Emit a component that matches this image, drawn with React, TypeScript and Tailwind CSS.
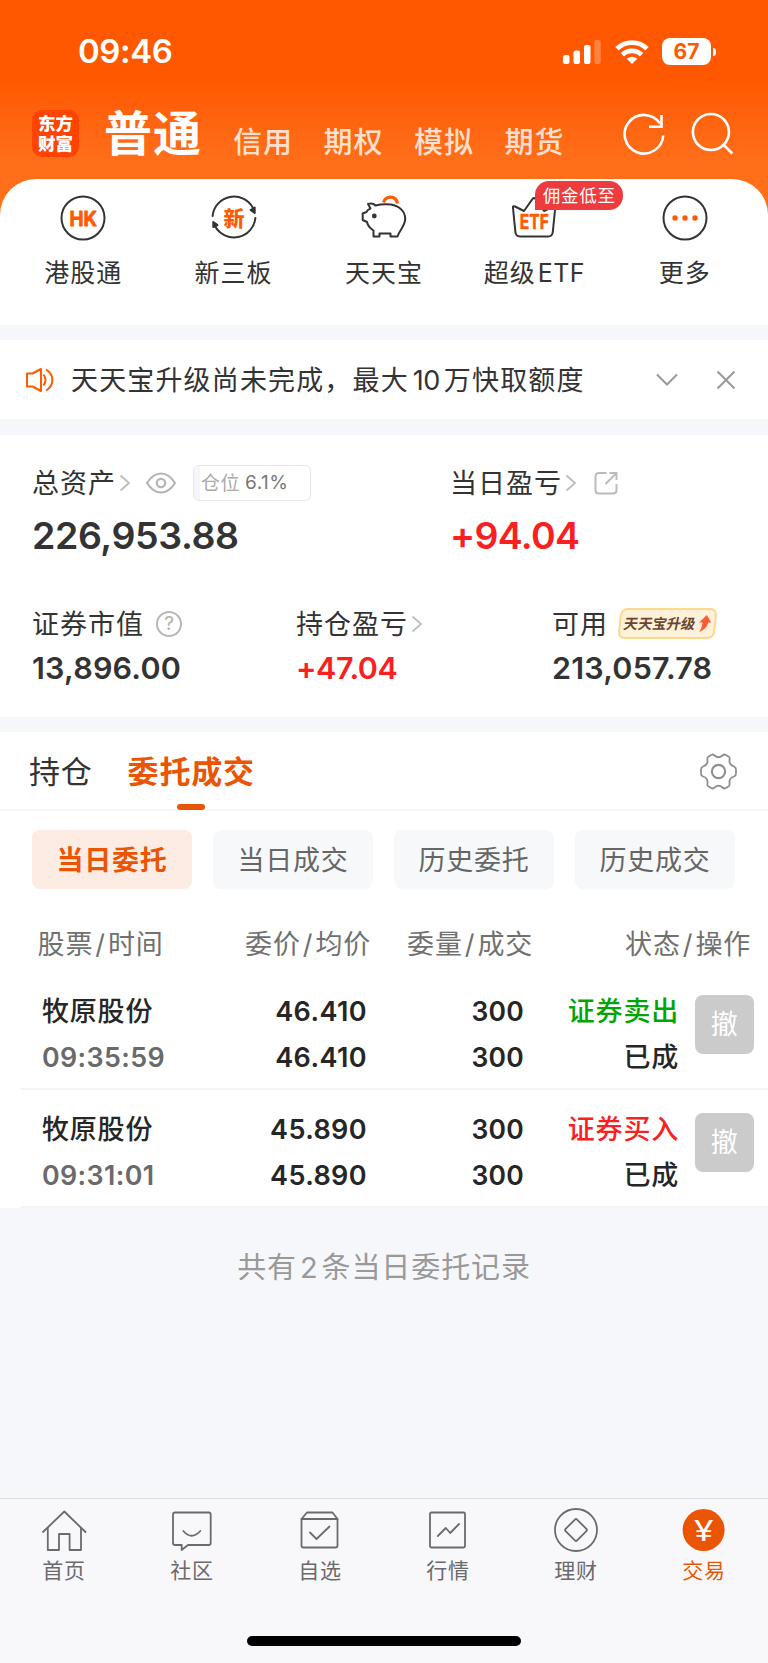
import type { ReactNode } from "react"

const shortcuts = [
  { label: "港股通", icon: <HkIcon /> },
  { label: "新三板", icon: <NewBoardIcon /> },
  { label: "天天宝", icon: <PiggyIcon /> },
  { label: "超级ETF", icon: <EtfIcon />, badge: "佣金低至" },
  { label: "更多", icon: <MoreIcon /> },
]

const filters = ["当日委托", "当日成交", "历史委托", "历史成交"]

const orders = [
  { name: "牧原股份", time: "09:35:59", price: "46.410", avg: "46.410", qty: "300", done: "300", side: "证券卖出", sell: true },
  { name: "牧原股份", time: "09:31:01", price: "45.890", avg: "45.890", qty: "300", done: "300", side: "证券买入", sell: false },
]

const tabs = [
  { label: "首页", icon: <HomeIcon /> },
  { label: "社区", icon: <ChatIcon /> },
  { label: "自选", icon: <BoxIcon /> },
  { label: "行情", icon: <ChartIcon /> },
  { label: "理财", icon: <WealthIcon /> },
  { label: "交易", icon: <TradeIcon />, active: true },
]

function Icon44({ children }: { children: ReactNode }) {
  return (
    <svg width="46" height="46" viewBox="-1 -1 46 46" fill="none" stroke="#333" strokeWidth="2" strokeLinecap="round" strokeLinejoin="round">
      {children}
    </svg>
  )
}

function HkIcon() {
  return (
    <Icon44>
      <circle cx="22" cy="22" r="21.5" />
      <text x="8.500" y="29.500" fontSize="20" fontWeight="700" fill="#ff5a00" stroke="#ff5a00" strokeWidth="0.800" textLength="27.500" lengthAdjust="spacingAndGlyphs">HK</text>
    </Icon44>
  )
}

function NewBoardIcon() {
  return (
    <Icon44>
      <path d="M0.6 20A21.5 21.5 0 0 1 41 12" />
      <path d="M43.4 22A21.5 21.5 0 0 1 3 30" />
      <path d="M42.7 11.5V17L38.5 14Z" fill="#333" />
      <path d="M1.3 31V26L5.5 29Z" fill="#333" />
      <text x="22" y="30" textAnchor="middle" fontSize="21" fontWeight="900" fill="#ff5a00" stroke="none">新</text>
    </Icon44>
  )
}

function PiggyIcon() {
  return (
    <Icon44>
      <path d="M21.500 6.500C23.500 0 33.500 -1.500 35.500 7.500" stroke="#ff5a00" strokeWidth="3.200" strokeLinecap="butt" />
      <path d="M6 8Q11 6.500 13.500 9.500Q21 7.500 29 8.500C38 10 43.200 16 43.200 22.500C43.200 30 38 33 35.500 40.500H28.500V37.500H17.500V40.500H11.500V34.500Q6 31 5 26L0.700 24V17.500L4.500 16Q5 14 8.500 12.500Z" />
      <circle cx="12.300" cy="20" r="2.400" fill="#333" stroke="none" />
    </Icon44>
  )
}

function EtfIcon() {
  return (
    <Icon44>
      <path d="M1 12Q0.500 9.500 3 10.500L12 15L20.500 3Q22 1 23.500 3L32 15L41 10.500Q43.500 9.500 43.200 12L40.800 36Q40.400 40.500 36 40.500H8Q3.800 40.500 3.400 36Z" />
      <text x="7.800" y="33" fontSize="20" fontWeight="700" fill="#ff5a00" stroke="#ff5a00" strokeWidth="0.600" textLength="29" lengthAdjust="spacingAndGlyphs">ETF</text>
    </Icon44>
  )
}

function MoreIcon() {
  return (
    <Icon44>
      <circle cx="22" cy="22" r="21.5" />
      <g fill="#ff5a00" stroke="none">
        <circle cx="12" cy="22" r="2.700" />
        <circle cx="22" cy="22" r="2.700" />
        <circle cx="32" cy="22" r="2.700" />
      </g>
    </Icon44>
  )
}

function TabSvg({ children }: { children: ReactNode }) {
  return (
    <svg width="46" height="46" viewBox="-1 -1 46 46" fill="none" stroke="#6b6b6d" strokeWidth="1.8" strokeLinecap="round" strokeLinejoin="round">
      {children}
    </svg>
  )
}

function HomeIcon() {
  return (
    <TabSvg>
      <path d="M1 24L22.300 3.500L43.500 24" />
      <path d="M5.800 20V42H17V26H27.600V42H39V20" />
    </TabSvg>
  )
}

function ChatIcon() {
  return (
    <TabSvg>
      <path d="M5 4.500H38.700Q40.700 4.500 40.700 6.500V35Q40.700 37 38.700 37H18L11.700 42V37H5Q3 37 3 35V6.500Q3 4.500 5 4.500Z" />
      <path d="M13.300 23Q21.500 32.500 30.300 23" />
    </TabSvg>
  )
}

function BoxIcon() {
  return (
    <TabSvg>
      <path d="M3.500 11L9 4.500H34.500L39.500 11V37.500Q39.500 39.500 37.500 39.500H5.500Q3.500 39.500 3.500 37.500Z" />
      <path d="M3.500 11H39.500M12 24.500L18.500 31L31.500 18.500" />
    </TabSvg>
  )
}

function ChartIcon() {
  return (
    <TabSvg>
      <rect x="4" y="4.500" width="35" height="35" rx="1.500" />
      <path d="M11.800 28L19.800 20L24.200 25L33 16" />
    </TabSvg>
  )
}

function WealthIcon() {
  return (
    <TabSvg>
      <circle cx="22" cy="22" r="21" />
      <path d="M20.900 11.600Q22 10.500 23.100 11.600L32.400 20.900Q33.500 22 32.400 23.100L23.100 32.400Q22 33.500 20.900 32.400L11.600 23.100Q10.500 22 11.600 20.900Z" />
    </TabSvg>
  )
}

function TradeIcon() {
  return (
    <TabSvg>
      <circle cx="21.600" cy="22" r="21" fill="#ea5504" stroke="none" />
      <text x="12" y="32.500" fontSize="28" fill="#fff" stroke="none" textLength="19.500" lengthAdjust="spacingAndGlyphs">¥</text>
    </TabSvg>
  )
}

function Chevron({ className = "" }: { className?: string }) {
  return (
    <svg className={className} width="12" height="18" viewBox="0 0 12 18" fill="none" stroke="#bdbdbd" strokeWidth="1.800">
      <path d="M1.500 1.500L10 9L1.500 16.500" />
    </svg>
  )
}

function StatusBar() {
  return (
    <div className="flex h-[103px] items-center pl-[78px] pr-[52px] text-white">
      <div className="text-[33px] font-semibold leading-none tracking-[-0.400px]">09:46</div>
      <svg className="ml-auto" width="40" height="26" viewBox="0 0 40 26" fill="#fff">
        <rect x="1" y="16" width="6.500" height="9" rx="2" />
        <rect x="11.500" y="11.500" width="6.500" height="13.500" rx="2" />
        <rect x="22" y="6" width="6.500" height="19" rx="2" />
        <rect x="32.300" y="1" width="6.500" height="24" rx="2" opacity="0.250" />
      </svg>
      <svg className="ml-[13px]" width="34" height="26" viewBox="0 0 34 26" fill="none" stroke="#fff" strokeWidth="4.800">
        <path d="M2 9.700A21.500 21.500 0 0 1 32 9.700" />
        <path d="M7.400 15.700A13.800 13.800 0 0 1 26.600 15.700" />
        <path d="M17 25L11.700 19.800A7.600 7.600 0 0 1 22.300 19.800Z" fill="#fff" stroke="none" />
      </svg>
      <div className="ml-[13px] flex h-[27px] w-[49px] items-center justify-center rounded-[8px] bg-white text-[21px] font-bold leading-none text-[#ff5a00]">67</div>
      <div className="ml-0.5 h-2 w-[3px] rounded-r-full bg-white" />
    </div>
  )
}

function Header() {
  return (
    <header className="h-[223px] bg-linear-to-b from-[#ff5800] from-[80px] to-[#ff6e19] to-[160px]">
      <StatusBar />
      <div className="flex h-[76px] items-start pl-8">
        <div className="mt-[7px] flex h-[47px] w-[47px] flex-col items-center justify-center rounded-[10px] bg-[#ff4300] text-[17.500px] font-black leading-[20px] text-white">
          <span>东方</span>
          <span>财富</span>
        </div>
        <div className="ml-[25px] mt-[6px] text-[48px] font-bold leading-[50px] tracking-[1px] text-white">普通</div>
        <div className="ml-[31px] mt-[21.500px] flex gap-[30.500px] text-[29px] font-medium leading-[36px] tracking-[1px] text-[#ffe0cf]">
          <span>信用</span>
          <span>期权</span>
          <span>模拟</span>
          <span>期货</span>
        </div>
        <svg className="ml-[57.500px] mt-[9px]" width="44" height="44" viewBox="0 0 44 44" fill="none" stroke="#fff" strokeWidth="2.600">
          <path d="M41.200 23.500A19.300 19.300 0 1 1 38 11.500" />
          <path d="M39.500 3V14.800H27" />
        </svg>
        <svg className="ml-6 mt-[8px]" width="44" height="44" viewBox="0 0 44 44" fill="none" stroke="#fff" strokeWidth="2.600">
          <circle cx="20.900" cy="21" r="18" />
          <path d="M33.300 33.500L42.300 42.500" />
        </svg>
      </div>
    </header>
  )
}

function Shortcuts() {
  return (
    <section className="-mt-11 h-[146px] rounded-t-[36px] bg-white px-2 pt-4">
      <div className="grid grid-cols-5">
        {shortcuts.map((s) => (
          <div key={s.label} className="relative flex flex-col items-center">
            {s.icon}
            <div className="mt-[15px] text-[25px] leading-[34px] tracking-[1px] text-[#333]">
              {s.label === "超级ETF" ? <>超级<span className="ml-[2px] tracking-[0.500px]">ETF</span></> : s.label}
            </div>
            {s.badge && (
              <div className="absolute left-[76px] -top-[14px] flex h-[29px] w-[88px] items-center justify-center rounded-[14px] rounded-bl-none bg-[#ed3b3e] text-[17.500px] leading-none tracking-[0.700px] text-white">
                {s.badge}
              </div>
            )}
          </div>
        ))}
      </div>
    </section>
  )
}

function Notice() {
  return (
    <section className="mt-[15px] flex h-[79px] items-center bg-white pl-[25px] pr-8">
      <svg width="30" height="26" viewBox="0 0 30 26" fill="none" stroke="#ff5a00" strokeWidth="2" strokeLinejoin="round">
        <path d="M2 6.500H7.500L16 2V24L7.500 19.500H2Z" />
        <path d="M18.500 7.500Q22.500 13 18.500 18.500" />
        <path d="M21 2.500C29.500 7.500 29.500 18.500 21 23.500" />
      </svg>
      <div className="ml-[16px] whitespace-nowrap pt-px text-[27px] leading-none tracking-[1.150px] text-[#333]">
        天天宝升级尚未完成，最大<span className="mx-1 tracking-[-0.500px]">10</span>万快取额度
      </div>
      <svg className="ml-auto" width="22" height="14" viewBox="0 0 22 14" fill="none" stroke="#999" strokeWidth="2">
        <path d="M1 1.500L11 11.500L21 1.500" />
      </svg>
      <svg className="ml-[38px]" width="20" height="20" viewBox="0 0 20 20" fill="none" stroke="#999" strokeWidth="2">
        <path d="M1.500 1.500L18.500 18.500M18.500 1.500L1.500 18.500" />
      </svg>
    </section>
  )
}

function Assets() {
  return (
    <section className="mt-[15.500px] h-[282px] bg-white pl-8 pt-[30px] text-[27px] tracking-[1px] text-[#333]">
      <div className="flex">
        <div className="w-[418px]">
          <div className="flex h-9 items-center">
            <span className="pt-[3px]">总资产</span>
            <Chevron className="ml-[3px]" />
            <svg className="ml-3.5" width="32" height="22" viewBox="0 0 32 22" fill="none" stroke="#b5b5b5" strokeWidth="2.200">
              <path d="M2 11Q8 1.500 16 1.500T30 11Q24 20.500 16 20.500T2 11Z" />
              <circle cx="16" cy="11" r="4.200" />
            </svg>
            <div className="ml-4 flex h-9 w-[118px] items-center overflow-hidden rounded-md border-[1.500px] border-[#e6e7ea] text-[19px] tracking-[0.500px]">
              <div className="h-full w-1.5 bg-[#f5f6f9]" />
              <span className="ml-px pt-[3px] text-[#aaa]">仓位</span>
              <span className="ml-[5px] pt-[2px] text-[#777]">6.1%</span>
            </div>
          </div>
          <div className="mt-[13.500px] text-[37.500px] font-semibold leading-[44px] tracking-[-0.400px]">226,953.88</div>
        </div>
        <div>
          <div className="flex h-9 items-center">
            <span className="pt-[3px]">当日盈亏</span>
            <Chevron className="ml-[3px]" />
            <svg className="ml-[17px]" width="24" height="24" viewBox="0 0 24 24" fill="none" stroke="#bbb" strokeWidth="2">
              <path d="M12.500 2H5Q1.500 2 1.500 5.500V19Q1.500 22.500 5 22.500H18.500Q22.500 22.500 22.500 19V13" />
              <path d="M15.500 2H22.500V9M22 2.500L11.500 13" />
            </svg>
          </div>
          <div className="mt-[13.500px] text-[37.500px] font-semibold leading-[44px] tracking-[-0.700px] text-[#f8211f]">+94.04</div>
        </div>
      </div>
      <div className="mt-[47.500px] flex">
        <div className="w-[264px]">
          <div className="flex h-9 items-center">
            <span className="pt-[3px]">证券市值</span>
            <span className="ml-3 flex h-[26px] w-[26px] items-center justify-center rounded-full border-2 border-[#b8b8b8] text-[19px] leading-none tracking-normal text-[#b0b0b0]">?</span>
          </div>
          <div className="mt-[8px] text-[30.500px] font-semibold leading-[36px] tracking-[0.200px]">13,896.00</div>
        </div>
        <div className="w-[256px]">
          <div className="flex h-9 items-center">
            <span className="pt-[3px]">持仓盈亏</span>
            <Chevron className="ml-[3px]" />
          </div>
          <div className="mt-[8px] text-[30.500px] font-semibold leading-[36px] tracking-[-0.400px] text-[#f8211f]">+47.04</div>
        </div>
        <div>
          <div className="flex h-9 items-center">
            <span className="pt-[3px]">可用</span>
            <div className="ml-[11px] flex h-[31px] w-[97px] -skew-x-6 items-center justify-center rounded-[7px] border-2 border-[#fcd88a] bg-[#fdf1d9] text-[14.300px] font-bold tracking-normal text-[#6d452b]">
              <span className="-skew-x-6">天天宝升级</span>
              <svg className="ml-[2px]" width="13" height="17" viewBox="0 0 13 17" fill="#fb5a36">
                <path d="M8 0L13 7.500H10Q9.500 14 2 17Q4.500 13 4.500 7.500H1Z" />
              </svg>
            </div>
          </div>
          <div className="mt-[8px] text-[30.500px] font-semibold leading-[36px] tracking-[0.200px]">213,057.78</div>
        </div>
      </div>
    </section>
  )
}

function OrderTabs() {
  return (
    <div className="flex h-[79px] items-start border-b-2 border-[#f6f6f8] pl-[29px] pr-[31px] text-[31px] leading-[79px] tracking-[0.800px]">
      <span className="text-[#333]">持仓</span>
      <div className="relative ml-[35px] h-[77px] font-bold text-[#ea5504]">
        委托成交
        <div className="absolute bottom-[-1.500px] left-[49px] h-1.5 w-7 rounded-[3px] bg-[#ea5504]" />
      </div>
      <svg className="ml-auto mt-[21px]" width="37" height="37" viewBox="-18.500 -18.500 37 37" fill="none" stroke="#8f8f8f" strokeWidth="1.800" strokeLinejoin="round">
        <path d="M-7 -16.700Q-5.500 -17.500 -4 -16Q0 -12.500 4 -16Q5.500 -17.500 7 -16.700L10.300 -14.700Q11.500 -14 11 -11.500Q10.500 -6.500 15.500 -5Q17.500 -4 17.500 -2V2Q17.500 4 15.500 5Q10.500 6.500 11 11.500Q11.500 14 10.300 14.700L7 16.700Q5.500 17.500 4 16Q0 12.500 -4 16Q-5.500 17.500 -7 16.700L-10.300 14.700Q-11.500 14 -11 11.500Q-10.500 6.500 -15.500 5Q-17.500 4 -17.500 2V-2Q-17.500 -4 -15.500 -5Q-10.500 -6.500 -11 -11.500Q-11.500 -14 -10.300 -14.700Z" />
        <circle r="6.600" strokeWidth="2.200" />
      </svg>
    </div>
  )
}

function HeadCell({ a, b, className }: { a: string; b: string; className: string }) {
  return (
    <div className={className}>
      {a}
      <span className="mx-[2px]">/</span>
      {b}
    </div>
  )
}

function Orders() {
  return (
    <section className="mt-[15px] bg-white">
      <OrderTabs />
      <div className="flex gap-[21px] pl-8 pr-[33px] pt-[19px]">
        {filters.map((f, i) => (
          <div
            key={f}
            className={
              "flex h-[59px] flex-1 items-center justify-center rounded-lg pt-[2px] text-[27px] leading-none tracking-[0.700px] " +
              (i === 0 ? "bg-[#fdece4] font-bold text-[#ea5504]" : "bg-[#f7f8fa] text-[#666]")
            }
          >
            {f}
          </div>
        ))}
      </div>
      <div className="mt-[36px] flex h-[47.500px] pl-[37.500px] text-[27px] leading-10 tracking-[0.900px] text-[#707070]">
        <HeadCell a="股票" b="时间" className="w-[207.500px]" />
        <HeadCell a="委价" b="均价" className="w-[162px]" />
        <HeadCell a="委量" b="成交" className="w-[218px]" />
        <HeadCell a="状态" b="操作" className="whitespace-nowrap" />
      </div>
      {orders.map((o) => (
        <div key={o.time} className="ml-5 flex h-[118px] border-b-2 border-[#f4f4f6] pl-[22px] pt-[17px] text-[27px] font-semibold leading-[45.500px] tracking-[0.400px] text-[#262626]">
          <div className="w-[180px]">
            <div className="font-medium tracking-[0.800px]">{o.name}</div>
            <div className="text-[26.800px] text-[#6a6a6a]">{o.time}</div>
          </div>
          <div className="w-[145px] text-right">
            <div>{o.price}</div>
            <div>{o.avg}</div>
          </div>
          <div className="w-[157px] text-right text-[26.500px] tracking-[0.200px]">
            <div>{o.qty}</div>
            <div>{o.done}</div>
          </div>
          <div className="w-[155px] text-right font-medium tracking-[0.800px]">
            <div className={o.sell ? "text-[#05a405]" : "text-[#f8211f]"}>{o.side}</div>
            <div>已成</div>
          </div>
          <button className="ml-[16px] mt-[6px] h-[59px] w-[59px] rounded-lg bg-[#cbcbcb] text-[27px] font-normal leading-[60px] text-white">撤</button>
        </div>
      ))}
    </section>
  )
}

function TabBar() {
  return (
    <nav className="mt-auto h-[165px] border-t border-[#e0e0e3] bg-[#f8f8fb] pt-2">
      <div className="grid grid-cols-6">
        {tabs.map((t) => (
          <div key={t.label} className="flex flex-col items-center">
            {t.icon}
            <span className={"mt-[3px] text-[21px] leading-[30px] tracking-[0.800px] " + (t.active ? "text-[#ea5504]" : "text-[#6a6a6c]")}>{t.label}</span>
          </div>
        ))}
      </div>
      <div className="mx-auto mt-[50px] h-2.5 w-[274px] rounded-full bg-black" />
    </nav>
  )
}

export default function App() {
  return (
    <div className="flex h-[1663px] w-[768px] flex-col overflow-hidden bg-[#f6f7fa] font-[Inter,'Noto_Sans_CJK_SC',sans-serif]">
      <Header />
      <Shortcuts />
      <Notice />
      <Assets />
      <Orders />
      <div className="mt-[38px] text-center text-[29px] leading-[44px] tracking-[0.900px] text-[#999]">
        共有<span className="mx-[3px]">2</span>条当日委托记录
      </div>
      <TabBar />
    </div>
  )
}
